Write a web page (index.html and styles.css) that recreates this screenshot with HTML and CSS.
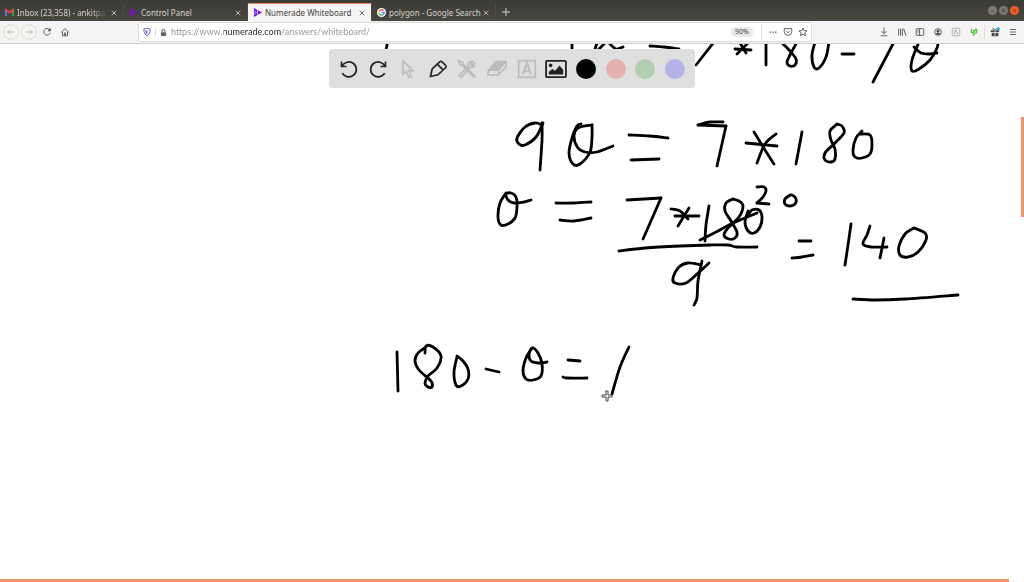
FILE: index.html
```html
<!DOCTYPE html>
<html lang="en">
<head>
  <meta charset="UTF-8">
  <title>Numerade Whiteboard</title>
  <meta name="viewport" content="width=device-width, initial-scale=1.0">
  <link rel="stylesheet" href="styles.css">
</head>
<body>
  <header class="tabbar">
    <div class="tab">
      <svg class="favicon" viewBox="0 0 10 10"><path d="M1 9V2l4 3 4-3v7" fill="none" stroke="#e6443a" stroke-width="2"/><path d="M1 9V3" stroke="#4a84e8" stroke-width="2"/><path d="M9 9V3" stroke="#39a852" stroke-width="2"/></svg>
      <a class="tab-title fade" href="#">Inbox (23,358) - ankitpa</a>
      <button class="close" aria-label="Close tab"><svg viewBox="0 0 8 8"><path d="M1 1l6 6M7 1L1 7"/></svg></button>
    </div>
    <div class="tab">
      <svg class="favicon" viewBox="0 0 10 10"><path d="M1 0l9 5-9 5z" fill="#6a1fa5"/></svg>
      <a class="tab-title" href="#">Control Panel</a>
      <button class="close" aria-label="Close tab"><svg viewBox="0 0 8 8"><path d="M1 1l6 6M7 1L1 7"/></svg></button>
    </div>
    <div class="tab active">
      <svg class="favicon" viewBox="0 0 10 10"><path d="M1 0l9 5-9 5z" fill="#6b16e8"/><path d="M1 3l3 2-3 2M5 2v6" fill="none" stroke="#f5f4f2" stroke-width=".7"/></svg>
      <a class="tab-title" href="#">Numerade Whiteboard</a>
      <button class="close" aria-label="Close tab"><svg viewBox="0 0 8 8"><path d="M1 1l6 6M7 1L1 7"/></svg></button>
    </div>
    <div class="tab">
      <svg class="favicon" viewBox="0 0 10 10"><circle cx="5" cy="5" r="5" fill="#fff"/><g fill="none" stroke-width="1.4"><path d="M7.300 2.900A3 3 0 0 0 2.400 3.600" stroke="#ea4335"/><path d="M2.400 3.600a3 3 0 0 0 0 2.800" stroke="#fbbc05"/><path d="M2.400 6.400A3 3 0 0 0 7 7.300" stroke="#34a853"/><path d="M7 7.300A3 3 0 0 0 8 5H5" stroke="#4285f4"/></g></svg>
      <a class="tab-title" href="#">polygon - Google Search</a>
      <button class="close" aria-label="Close tab"><svg viewBox="0 0 8 8"><path d="M1 1l6 6M7 1L1 7"/></svg></button>
    </div>
    <button class="new-tab" aria-label="New tab"><svg viewBox="0 0 8 8"><path d="M4 0v8M0 4h8"/></svg></button>
    <div class="window-buttons">
      <button aria-label="Minimize"><svg viewBox="0 0 8 8"><path d="M2 5h4"/></svg></button>
      <button aria-label="Maximize"><svg viewBox="0 0 8 8"><path d="M2.500 2.500h3v3h-3z"/></svg></button>
      <button class="quit" aria-label="Close"><svg viewBox="0 0 8 8"><path d="M2.500 2.500l3 3M5.500 2.500l-3 3"/></svg></button>
    </div>
  </header>

  <nav class="navbar">
    <div class="nav-buttons">
      <button class="round" aria-label="Back" disabled><svg viewBox="0 0 12 12"><path d="M10 6H2M5 3L2 6l3 3"/></svg></button>
      <button class="round" aria-label="Forward" disabled><svg viewBox="0 0 12 12"><path d="M2 6h8M7 3l3 3-3 3"/></svg></button>
      <button aria-label="Reload"><svg viewBox="0 0 12 12"><path d="M9.500 3.500A4 4 0 1 0 10 7"/><path d="M10.500 1v4h-4z" fill="currentColor" stroke="none"/></svg></button>
      <button aria-label="Home"><svg viewBox="0 0 12 12"><path d="M1.500 6.500L6 2l4.500 4.500M3 6v4.500h6V6M5.500 10V7h1v3"/></svg></button>
    </div>
    <div class="urlbar">
      <svg class="shield" viewBox="0 0 12 12"><path d="M6 1.500l3.800 1c0 4-1 6.500-3.800 8-2.800-1.500-3.800-4-3.800-8z"/><path d="M6 4v4M4.500 4.200c0 2 .3 3 1.500 4"/></svg>
      <svg class="lock" viewBox="0 0 12 12"><path d="M4 6V4a2 2 0 0 1 4 0v2" fill="none" stroke="#666" stroke-width="1.400"/><rect x="2.500" y="5.500" width="7" height="5" rx="1" fill="#666"/></svg>
      <input class="url" type="text" aria-label="Address" value="https://www.numerade.com/answers/whiteboard/" spellcheck="false">
      <button class="zoom">90%</button>
      <div class="url-actions">
        <button aria-label="Page actions"><svg viewBox="0 0 12 12"><path d="M2 6h1.500M5.300 6h1.500M8.600 6h1.500" stroke-width="1.500"/></svg></button>
        <button aria-label="Save to Pocket"><svg viewBox="0 0 12 12"><path d="M1.500 2h9v3.500a4.500 4.500 0 0 1-9 0zM4 5l2 2 2-2"/></svg></button>
        <button aria-label="Bookmark"><svg viewBox="0 0 12 12"><path d="M6 1.200l1.400 3.200 3.500.3-2.700 2.300.8 3.500-3-1.900-3 1.900.8-3.500-2.700-2.300 3.500-.3z"/></svg></button>
      </div>
    </div>
    <div class="tools">
      <button aria-label="Downloads"><svg viewBox="0 0 12 12"><path d="M6 1v7M3 5l3 3 3-3M2 10.500h8"/></svg></button>
      <button aria-label="Library"><svg viewBox="0 0 12 12"><path d="M2 2v8.500M4.300 2v8.500M6.500 2v8.500M8 2l2.700 8.500"/></svg></button>
      <button aria-label="Sidebars"><svg viewBox="0 0 12 12"><rect x="1.500" y="2" width="9" height="8" rx="1"/><path d="M5.500 2v8M3 4h1.500M3 6h1.500"/></svg></button>
      <button aria-label="Account"><svg viewBox="0 0 12 12"><circle cx="6" cy="6" r="4"/><circle cx="6" cy="5" r="1.300" fill="currentColor"/><path d="M3.500 8.500q2.500-2.500 5 0z" fill="currentColor"/></svg></button>
      <button class="muted" aria-label="Extension"><svg viewBox="0 0 12 12"><rect x="1.500" y="1.500" width="9" height="9" rx="1"/><path d="M4 3.500v5M4 4h2.500v2H4M6.500 8.500H8V6"/></svg></button>
      <button class="green" aria-label="Page check"><svg viewBox="0 0 12 12"><path d="M3 2v4.500L6 7.500 9 7V2M6 7.500l-1 3M5 4l1 1.500L8 2.500" stroke-width="1.500"/></svg></button>
      <span class="divider"></span>
      <button class="gift" aria-label="What's new"><svg viewBox="0 0 12 12"><path d="M1 4h10v2H1zM2 7h8v4H2z" fill="currentColor" stroke="none"/><path d="M6 4L4 1.500 3 3M6 4l2-2.500"/><path d="M6 4v7" stroke="#f5f4f2" stroke-width="1"/><circle cx="10" cy="2" r="1.800" fill="#12a8f0" stroke="none"/></svg></button>
      <button aria-label="Menu"><svg viewBox="0 0 12 12"><path d="M2.500 3h7M2.500 6h7M2.500 9h7"/></svg></button>
    </div>
  </nav>

  <main class="board">
    <svg class="ink" id="ink" viewBox="0 44 1024 538" preserveAspectRatio="xMidYMin slice" role="img" aria-label="Handwritten working for the angle of a polygon"></svg>
    <div class="toolbar">
      <button aria-label="Undo"><svg viewBox="0 0 24 24"><path d="M3 3v6h6M3.500 9A9 9 0 1 1 4 17"/></svg></button>
      <button aria-label="Redo"><svg viewBox="0 0 24 24"><path d="M21 3v6h-6M20.500 9A9 9 0 1 0 20 17"/></svg></button>
      <button class="off" aria-label="Select"><svg viewBox="0 0 24 24"><path d="M6 2v16l4-3 3 7 3-1-3-7h5z"/></svg></button>
      <button aria-label="Pen"><svg viewBox="0 0 24 24"><path d="M3 21l2-9L14 3.500a2 2 0 0 1 3 0l4 4a2 2 0 0 1 0 3L12 19zM11.500 6.500l6.500 6.500"/></svg></button>
      <button class="off" aria-label="Shapes"><svg viewBox="0 0 24 24"><path d="M2 2l5 2 1 3 11 11 3 4-4-2L7 8 4 7zM21 5l-3 3-2-2 3-3c-5-1-7 3-5 6L3 19c-1 2 1 3 3 2l10-11c4 1 6-2 5-5z"/></svg></button>
      <button class="off" aria-label="Eraser"><svg viewBox="0 0 24 24"><path d="M11 3h12l-9 10H2z" fill="currentColor"/><path d="M2 13h12v6H1zM14 19l9-10V3"/></svg></button>
      <button class="off" aria-label="Text"><svg viewBox="0 0 24 24"><rect x="2" y="2" width="20" height="20"/><path d="M7 18l5-13 5 13M9 14h6" stroke-width="2.500"/></svg></button>
      <button aria-label="Image"><svg class="wide" viewBox="0 0 24 20"><rect x="1" y="1" width="22" height="18" rx="1"/><circle cx="6" cy="6" r="2" fill="currentColor" stroke="none"/><path d="M4 16v-3l4-3 3 2 5-6 4 5v5z" fill="currentColor" stroke="none"/></svg></button>
      <button class="swatch black" aria-label="Black"></button>
      <button class="swatch red" aria-label="Red"></button>
      <button class="swatch leaf" aria-label="Green"></button>
      <button class="swatch blue" aria-label="Blue"></button>
    </div>
    <span class="edge-right"></span>
    <span class="edge-bottom"></span>
  </main>
  <script src="script.js"></script>
</body>
</html>
```
FILE: styles.css
```css
* { box-sizing: border-box; }
body {
  margin: 0;
  min-height: 100vh;
  display: flex;
  flex-direction: column;
  background: #fff;
  color: #444;
  font-family: "Noto Sans", "Open Sans", sans-serif;
  font-size: 8px;
  overflow: hidden;
}
button { border: 0; padding: 0; background: none; color: inherit; font: inherit; display: grid; place-items: center; }
svg { display: block; fill: none; stroke: currentColor; }
a { color: inherit; text-decoration: none; }

/* tabs */
.tabbar {
  height: 21px;
  display: flex;
  align-items: stretch;
  background: linear-gradient(#3b3a35, #484740);
  color: #d5d3cc;
}
.tab {
  width: 124px;
  margin-top: 3px;
  padding: 0 6px 0 5px;
  display: flex;
  align-items: center;
  gap: 3px;
  border-top: 1px solid transparent;
  border-right: 1px solid #4d4c46;
}
.tab.active { background: #f5f4f2; color: #444; border-top-color: #e9875b; }
.favicon { width: 9px; height: 9px; flex: none; stroke: none; }
.tab-title { flex: 1; min-width: 0; white-space: nowrap; line-height: 12px; }
.fade { mask-image: linear-gradient(90deg, #000 80%, transparent); }
.close svg { width: 6px; height: 6px; }
.new-tab { width: 20px; margin-top: 3px; }
.new-tab svg { width: 8px; height: 8px; }
.window-buttons { margin-left: auto; padding-right: 5px; display: flex; align-items: center; gap: 2px; }
.window-buttons button { width: 9px; height: 9px; border-radius: 50%; background: #7d7b74; color: #45443f; }
.window-buttons svg { width: 7px; height: 7px; }
.window-buttons .quit { background: #ee5b2b; color: #7c2b12; }

/* address row */
.navbar {
  height: 23px;
  display: flex;
  align-items: center;
  background: #f5f4f2;
  border-bottom: 1px solid #cfcdca;
}
.nav-buttons { display: flex; gap: 2px; padding-left: 3px; width: 138px; color: #444; }
.nav-buttons button, .tools button { width: 16px; height: 16px; }
.nav-buttons svg, .tools svg, .url-actions svg { width: 10px; height: 10px; }
.nav-buttons .round { color: #b5b3b0; border: 1px solid #dedcd9; border-radius: 50%; }
.urlbar {
  flex: 1;
  height: 20px;
  display: flex;
  align-items: center;
  background: #fff;
  border: 1px solid #dddbd8;
  border-radius: 2px;
}
.shield { width: 16px; height: 10px; color: #4343b5; }
.lock { width: 16px; height: 9px; border-left: 1px solid #ddd; stroke: none; }
.url {
  flex: 1;
  min-width: 0;
  border: 0;
  padding: 0;
  outline: 0;
  font: 9px Lato, sans-serif;
  line-height: 16px;
  color: transparent;
  /* darker host name between the grey scheme and path */
  background: linear-gradient(90deg, #929292 53px, #222 53px, #222 110px, #929292 110px);
  background-clip: text;
  -webkit-background-clip: text;
}
.zoom { width: 22px; height: 10px; border-radius: 5px; background: #e8e7e6; font-size: 7px; line-height: 10px; }
.url-actions { display: flex; margin-left: 8px; padding: 0 1px 0 3px; border-left: 1px solid #ddd; }
.url-actions button { width: 15px; height: 16px; }
.tools { display: flex; align-items: center; gap: 2px; width: 212px; padding-right: 3px; justify-content: flex-end; }
.tools .muted { color: #aaa; }
.tools .green { color: #43c62f; }
.divider { width: 1px; height: 14px; background: #ddd; }

/* whiteboard */
.board { position: relative; flex: 1; overflow: hidden; }
.ink { position: absolute; top: 0; left: 0; width: 100%; height: 100%; }
.ink path { stroke: #000; stroke-width: 2.800; stroke-linecap: round; stroke-linejoin: round; }
.ink .cursor { stroke: #444; stroke-width: 1; fill: #fff; }
.toolbar {
  position: absolute;
  top: 5px;
  left: 50%;
  transform: translateX(-50%);
  width: 366px;
  height: 39px;
  padding: 0 5px;
  display: grid;
  grid-template-columns: repeat(12, 1fr);
  align-items: center;
  justify-items: center;
  background: #dfdfdf;
  border-radius: 4px;
  color: #222;
}
.toolbar svg { width: 20px; height: 20px; stroke-width: 2; }
.toolbar .wide { width: 22px; height: 18px; }
.toolbar .off { color: #bcbcbc; }
.swatch { width: 20px; height: 20px; border-radius: 50%; }
.black { background: #000; }
.red { background: #e6b0b0; }
.leaf { background: #b0ceb0; }
.blue { background: #b3b3e6; }
.edge-right { position: absolute; top: 73px; right: 0; width: 3px; height: 100px; background: #f5936d; }
.edge-bottom { position: absolute; bottom: 0; left: 0; right: 15px; height: 3px; background: #f5936d; }
```
FILE: script.js
```js
// every stroke is a list of x,y points, joined by a smooth curve
const strokes = [
  // first line, partly scrolled away
  "388,40 386,50", "572,40 572,54", "598,40 594,52", "606,42 598,50", "608,42 616,49 623,47",
  "650,46 664,47 679,49", "714,42 696,65",
  "735,49 751,50", "748,43 737,54", "740,43 746,53", "766,40 766,65",
  "781,42 790,51 796,59 795,65 790,66 787,62 790,55 797,42",
  "815,42 812,55 814,67 819,68 826,57 829,42", "842,54 854,54", "894,42 873,82",
  "919,42 912,60 912,71 919,69 930,60 937,48 938,42", "914,47 921,53 930,54 937,53",
  // 9 theta = 7 * 180
  "542,125 535,123 525,127 517,138 519,144 525,145 536,137 543,123", "542,123 542,140 540,170",
  "581,124 577,126 572,138 569,153 573,164 580,164 590,152 592,137 592,125", "592,125 578,128 574,137 578,148 585,152 597,152 613,146",
  "629,135 650,136 668,138", "631,160 659,159",
  "723,122 710,122 698,125", "698,125 726,126", "726,126 717,166",
  "754,132 765,150 774,164", "776,134 765,144 757,163", "746,143 777,146", "802,132 796,164",
  "837,124 830,131 831,140 835,149 835,159 831,162 825,160 825,153 835,143 844,133 842,126 837,124",
  "862,131 856,138 853,150 855,157 862,158 870,154 872,144 870,135 860,134",
  // theta = 7 * 180 / 9
  "506,193 500,203 498,217 501,225 508,224 515,218 517,207 516,197 511,193 506,194 508,200 514,203 524,202 531,200",
  "556,203 574,203 591,202", "560,220 574,221 591,218",
  "627,200 661,198", "661,198 654,214 643,239",
  "671,209 680,211 688,219", "689,208 678,226", "675,216 699,216", "709,206 706,225 705,241",
  "733,199 726,203 725,211 731,221 737,232 735,238 729,239 724,235 728,228 739,217 743,206 739,201 733,199",
  "748,211 745,222 748,231 754,233 760,227 762,217 759,210 752,210 749,214",
  "700,240 716,232 733,223 757,213",
  "757,187 764,187 766,191 763,197 757,203", "757,203 769,204",
  "790,195 785,199 785,204 790,206 795,204 796,199 792,195 789,196",
  "619,251 645,248 680,246 710,245 728,245 737,247 757,247",
  "701,265 688,263 679,267 673,278 675,283 686,283 697,274 709,263", "702,261 698,281 697,298 694,305",
  // = 140
  "799,241 811,241", "792,258 802,257 813,255", "851,224 848,245 845,265",
  "870,226 867,235 863,244 871,247 887,247", "884,238 880,258",
  "914,228 905,234 899,246 900,255 908,257 918,252 926,240 925,233 914,228",
  "853,299 875,300 905,299 958,295",
  // 180 - theta = 1
  "397,352 398,391",
  "425,353 426,346 433,347 441,356 437,368 428,376 425,383 428,387 432,387 431,381 419,370 415,361 418,353 426,347",
  "457,357 454,372 456,385 461,386 468,379 468,369 463,361 457,356",
  "486,369 499,372",
  "532,348 526,358 523,371 526,379 533,380 541,376 542,364 538,353 532,348 529,355 531,361 538,363 547,362",
  "568,360 580,361", "563,377 567,378 587,378", "629,347 620,367 612,394"
];

const ink = document.getElementById("ink");

function addPath(d, className) {
  const path = document.createElementNS("http://www.w3.org/2000/svg", "path");
  path.setAttribute("d", d);
  if (className) path.setAttribute("class", className);
  ink.appendChild(path);
}

function smooth(points) {
  let d = `M${points[0]}`;
  for (let i = 0; i < points.length - 1; i++) {
    const a = points[i - 1] || points[i];
    const b = points[i];
    const c = points[i + 1];
    const e = points[i + 2] || c;
    d += `C${b[0] + (c[0] - a[0]) / 6},${b[1] + (c[1] - a[1]) / 6} ${c[0] - (e[0] - b[0]) / 6},${c[1] - (e[1] - b[1]) / 6} ${c}`;
  }
  return d;
}

strokes.forEach(s => addPath(smooth(s.split(" ").map(p => p.split(",").map(Number)))));
addPath("M606 391h2v4h4v2h-4v4h-2v-4h-4v-2h4z", "cursor");
```
